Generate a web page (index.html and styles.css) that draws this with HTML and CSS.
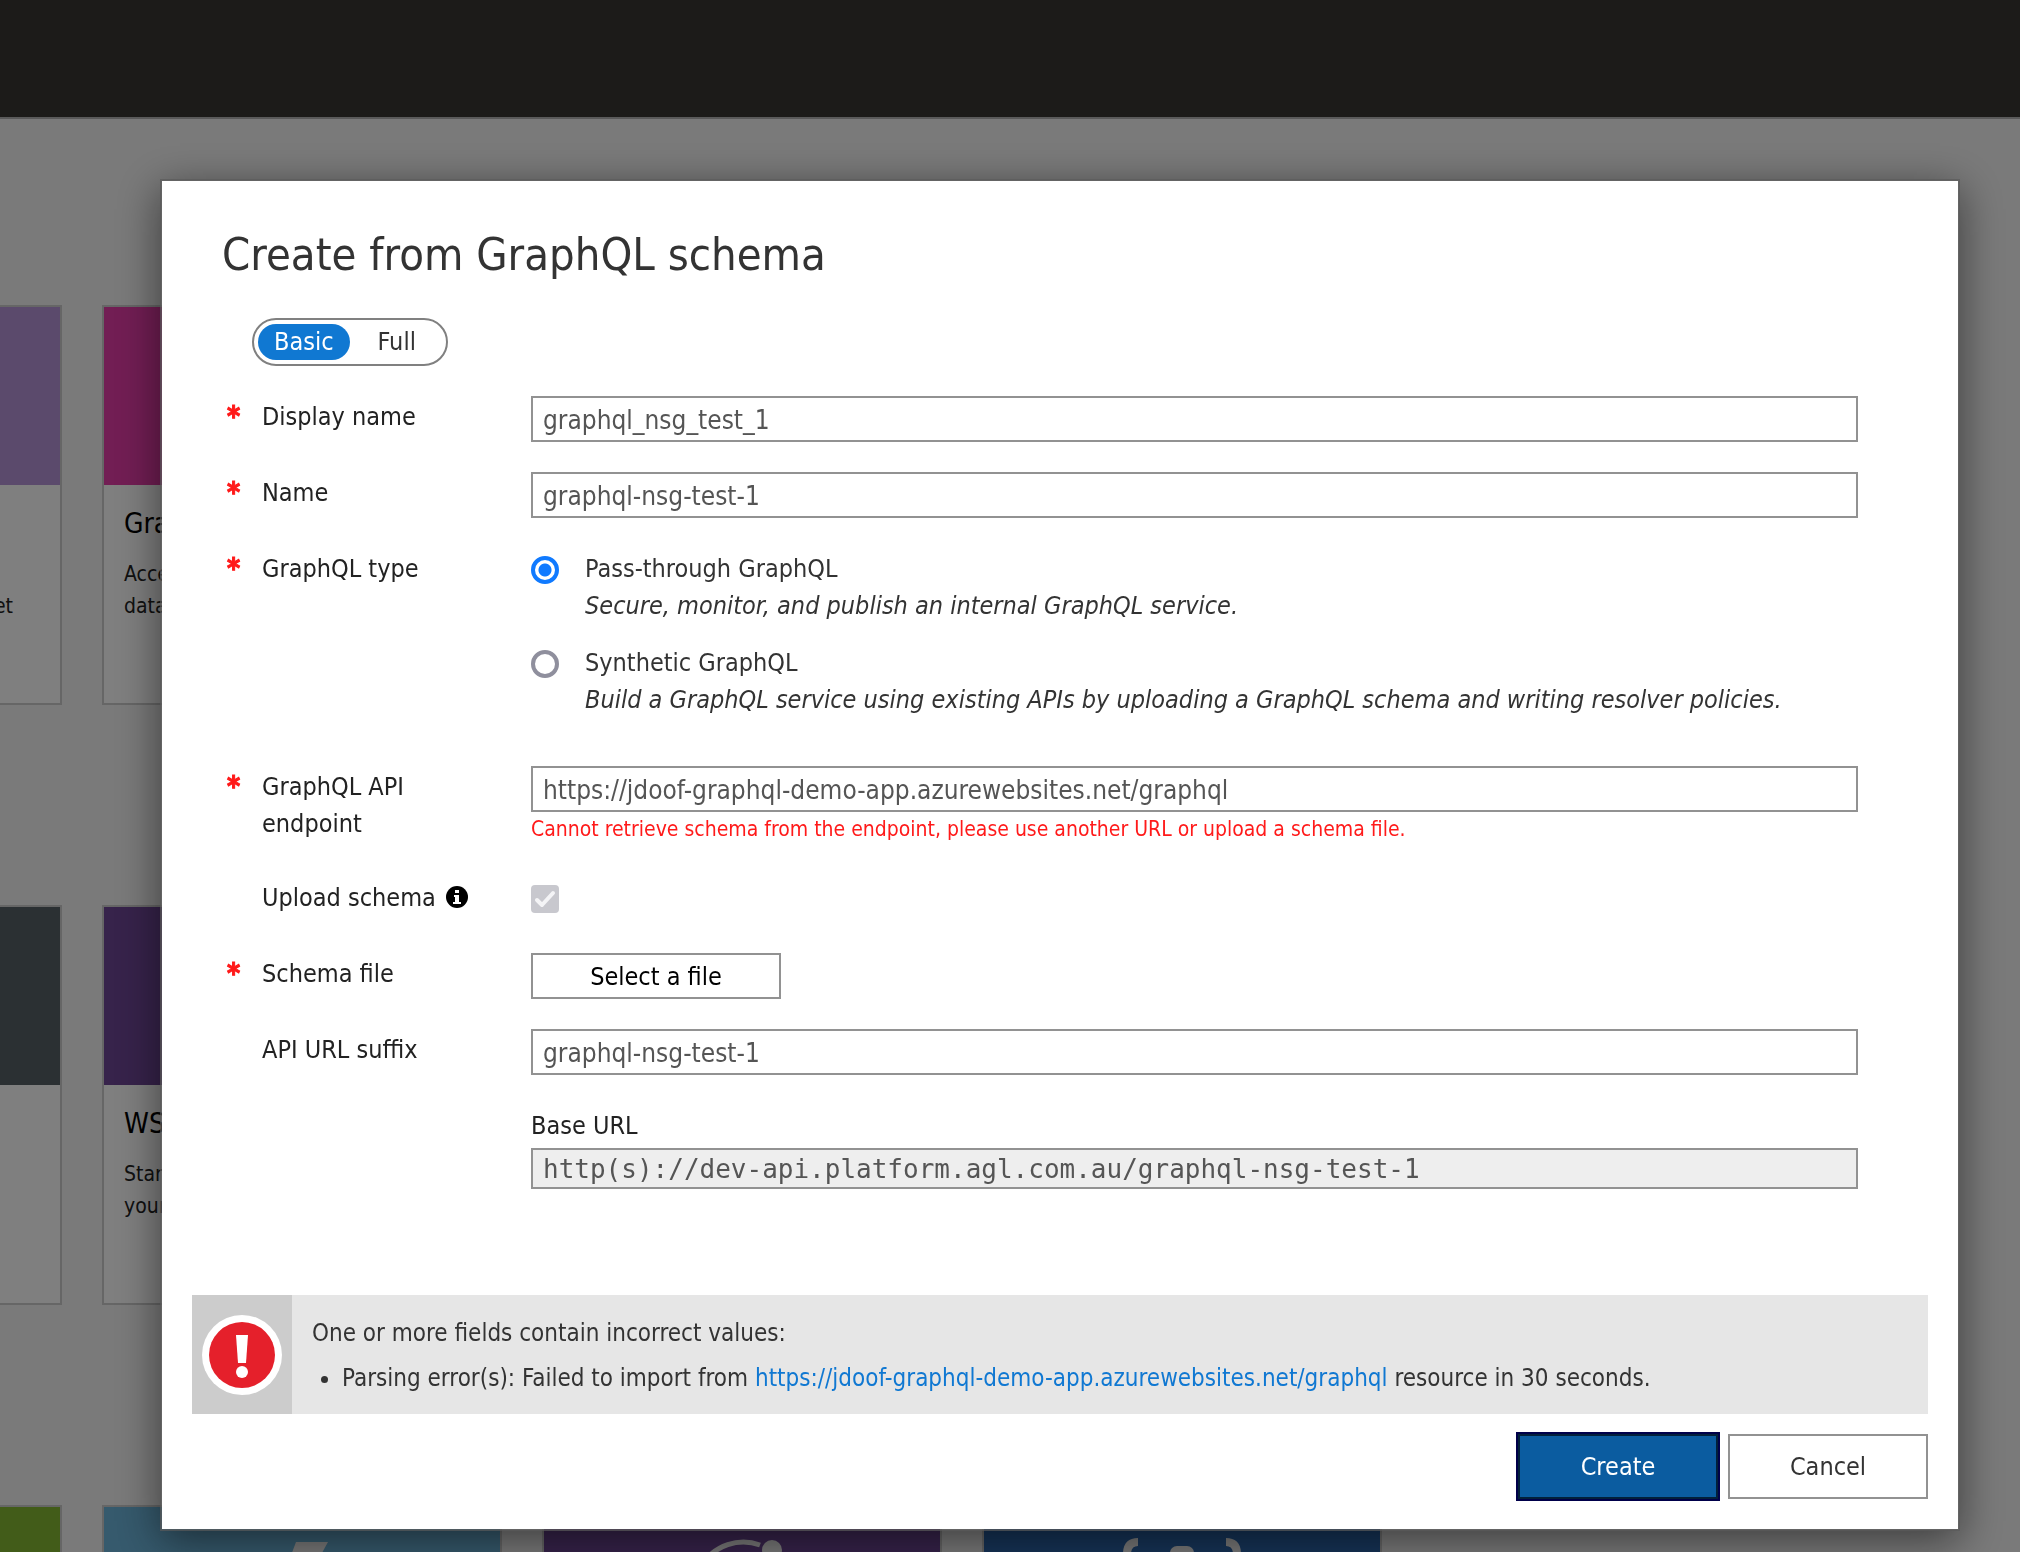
FILE: index.html
```html
<!DOCTYPE html>
<html lang="en">
<head>
    <meta charset="UTF-8">
    <meta name="viewport" content="width=device-width, initial-scale=1.0">
    <title>Create from GraphQL schema</title>
    <link rel="stylesheet" href="styles.css">
</head>
<body>
    <header class="top-bar"></header>

    <main class="gallery">
        <div class="card-row">
            <article class="card">
                <div class="card-head lilac"></div>
                <div class="card-body">
                    <p class="tail"><br>et</p>
                </div>
            </article>
            <article class="card">
                <div class="card-head pink"></div>
                <div class="card-body">
                    <h2>GraphQL</h2>
                    <p>Access the full capabilities of your<br>data from a single endpoint</p>
                </div>
            </article>
        </div>

        <div class="card-row">
            <article class="card">
                <div class="card-head slate"></div>
            </article>
            <article class="card">
                <div class="card-head purple"></div>
                <div class="card-body">
                    <h2>WSDL</h2>
                    <p>Standard XML representation of<br>your SOAP API</p>
                </div>
            </article>
        </div>

        <div class="card-row">
            <article class="card">
                <div class="card-head green"></div>
            </article>
            <article class="card">
                <div class="card-head sky">
                    <svg viewBox="0 0 396 178" aria-hidden="true"><path d="M192 35h32l-21 38h24l-50 72 12-54h-18z"/></svg>
                </div>
            </article>
            <article class="card">
                <div class="card-head purple">
                    <svg viewBox="0 0 396 178" aria-hidden="true">
                        <path class="line" d="M164 118a49 49 0 0 1 52-80"/>
                        <circle cx="228" cy="43" r="10"/>
                    </svg>
                </div>
            </article>
            <article class="card">
                <div class="card-head navy">
                    <svg viewBox="0 0 396 178" aria-hidden="true">
                        <path class="line thick" d="M154 35q-11 0-11 12v24q0 14-12 18q12 4 12 18v24q0 12 11 12M242 35q11 0 11 12v24q0 14 12 18q-12 4-12 18v24q0 12-11 12"/>
                        <rect x="186" y="39" width="24" height="90" rx="7"/>
                    </svg>
                </div>
            </article>
        </div>
    </main>

    <div class="overlay">
        <form class="modal" role="dialog" aria-labelledby="modal-title">
            <h1 id="modal-title">Create from GraphQL schema</h1>

            <div class="toggle">
                <button type="button" class="active">Basic</button>
                <button type="button">Full</button>
            </div>

            <div class="fields">
                <div class="field required">
                    <label for="display-name">Display name</label>
                    <input type="text" id="display-name" value="graphql_nsg_test_1">
                </div>

                <div class="field required">
                    <label for="name">Name</label>
                    <input type="text" id="name" value="graphql-nsg-test-1">
                </div>

                <div class="field required" role="radiogroup" aria-labelledby="type-label">
                    <span class="label" id="type-label">GraphQL type</span>
                    <div>
                        <div class="option">
                            <input type="radio" name="type" id="pass-through" checked>
                            <label for="pass-through">Pass-through GraphQL<br><em>Secure, monitor, and publish an internal GraphQL service.</em></label>
                        </div>
                        <div class="option">
                            <input type="radio" name="type" id="synthetic">
                            <label for="synthetic">Synthetic GraphQL<br><em>Build a GraphQL service using existing APIs by uploading a GraphQL schema and writing resolver policies.</em></label>
                        </div>
                    </div>
                </div>

                <div class="field required">
                    <label for="endpoint">GraphQL API endpoint</label>
                    <div>
                        <input type="text" id="endpoint" value="https://jdoof-graphql-demo-app.azurewebsites.net/graphql">
                        <p class="error">Cannot retrieve schema from the endpoint, please use another URL or upload a schema file.</p>
                    </div>
                </div>

                <div class="field">
                    <label for="upload">Upload schema
                        <svg class="info" viewBox="0 0 22 22" aria-hidden="true">
                            <circle cx="11" cy="11" r="11"/>
                            <path d="M9 4h4v3H9zM8 9h5v7h2v2H7v-2h2v-5H8z" fill="#fff"/>
                        </svg>
                    </label>
                    <input type="checkbox" id="upload" checked disabled>
                </div>

                <div class="field required">
                    <label for="schema-file">Schema file</label>
                    <button type="button" class="file-btn" id="schema-file">Select a file</button>
                </div>

                <div class="field">
                    <label for="suffix">API URL suffix</label>
                    <input type="text" id="suffix" value="graphql-nsg-test-1">
                </div>

                <div class="base-url">
                    <label for="base-url">Base URL</label>
                    <input type="text" id="base-url" value="http(s)://dev-api.platform.agl.com.au/graphql-nsg-test-1" readonly>
                </div>
            </div>

            <div class="alert" role="alert">
                <div class="alert-icon">
                    <svg viewBox="0 0 80 80" aria-hidden="true">
                        <circle cx="40" cy="40" r="40" fill="#fff"/>
                        <circle cx="40" cy="40" r="33" fill="#e5202b"/>
                        <path d="M34 20h12l-2 28h-8z" fill="#fff"/>
                        <circle cx="40" cy="57" r="6" fill="#fff"/>
                    </svg>
                </div>
                <div class="alert-text">
                    <p>One or more fields contain incorrect values:</p>
                    <ul>
                        <li>Parsing error(s): Failed to import from <a href="https://jdoof-graphql-demo-app.azurewebsites.net/graphql">https://jdoof-graphql-demo-app.azurewebsites.net/graphql</a> resource in 30 seconds.</li>
                    </ul>
                </div>
            </div>

            <div class="actions">
                <button type="submit" class="primary">Create</button>
                <button type="button">Cancel</button>
            </div>
        </form>
    </div>
</body>
</html>
```

FILE: styles.css
```css
* {
    box-sizing: border-box;
}
body {
    margin: 0;
    height: 100vh;
    overflow: hidden;
    background-color: #f4f4f4;
    color: #333;
    font-family: "DejaVu Sans Condensed", "DejaVu Sans", Tahoma, sans-serif;
    font-size: 25px;
    line-height: 37px;
}
h1, h2, p, ul {
    margin: 0;
    padding: 0;
    font-weight: normal;
}
button, input {
    font: inherit;
    color: inherit;
}
.top-bar {
    height: 119px;
    background-color: #383632;
    border-bottom: 2px solid #b4b4b4;
}

/* Cards behind the dialog, scrolled partly out to the left */
.gallery {
    display: flex;
    flex-direction: column;
    gap: 200px;
    margin-top: 186px;
    margin-left: -338px;
}
.card-row {
    display: flex;
    gap: 40px;
}
.card {
    flex: none;
    width: 400px;
    height: 400px;
    border: 2px solid #ccc;
    background-color: #fff;
    color: #222;
}
.card-head {
    height: 178px;
    fill: #f2f2f2;
}
.card-head svg {
    display: block;
}
.line {
    fill: none;
    stroke: #f2f2f2;
    stroke-width: 5px;
}
.thick {
    stroke-width: 8px;
}
.lilac { background-color: #b695d8; }
.pink { background-color: #e43ca8; }
.slate { background-color: #566066; }
.purple { background-color: #6e4696; }
.green { background-color: #84b832; }
.sky { background-color: #6cb4da; }
.navy { background-color: #2c68b0; }
.card-body {
    padding: 20px;
}
.card-body h2 {
    font-size: 28px;
    color: #000;
    margin-bottom: 16px;
}
.card-body p {
    font-size: 21px;
    line-height: 32px;
}
.card-body .tail {
    margin-top: 53px;
    padding-right: 27px;
    text-align: right;
}

.overlay {
    position: fixed;
    inset: 0;
    padding: 179px 60px 0 160px;
    background-color: rgba(0, 0, 0, 0.5);
}
.modal {
    padding: 40px 30px 30px;
    border: 2px solid rgba(90, 90, 90, 0.7);
    background-color: #fff;
    background-clip: padding-box;
    box-shadow: 0 10px 40px rgba(0, 0, 0, 0.5);
}
h1 {
    margin-left: 30px;
    font-size: 45px;
    line-height: 67px;
}
.toggle {
    display: inline-flex;
    margin: 30px 0 30px 60px;
    padding: 4px;
    border: 2px solid #808080;
    border-radius: 24px;
}
.toggle button {
    height: 36px;
    padding: 0 16px;
    border: none;
    border-radius: 18px;
    background: none;
    line-height: 36px;
}
.toggle button:last-child {
    padding: 0 26px 0 28px;
}
.toggle .active {
    background-color: #1078d2;
    color: #fff;
}

.fields {
    display: flex;
    flex-direction: column;
    gap: 30px;
    padding: 0 70px 0 30px;
    color: #222;
}
.field {
    display: grid;
    grid-template-columns: 229px 1fr;
    column-gap: 40px;
    align-items: start;
    min-height: 46px;
    padding-left: 40px;
    position: relative;
}
label, .label {
    display: block;
    padding-top: 2px;
}
.required::before {
    content: "*";
    position: absolute;
    left: 5px;
    top: 2px;
    color: #ff1a1a;
    font-size: 28px;
    font-weight: bold;
    -webkit-text-stroke: 1px #ff1a1a;
}
input[type="text"] {
    display: block;
    width: 100%;
    height: 46px;
    padding: 2px 10px 0;
    border: 2px solid #929292;
    border-radius: 0;
    background-color: #fff;
    color: #555;
    font-size: 26px;
}
input[type="radio"], input[type="checkbox"] {
    appearance: none;
    flex: none;
    width: 28px;
    height: 28px;
    margin: 8px 0 0;
}
input[type="radio"] {
    border: 4px solid #8f8f9d;
    border-radius: 50%;
}
input[type="radio"]:checked {
    border-color: #107aff;
    background: radial-gradient(circle, #107aff 6px, #fff 7px);
}
input[type="checkbox"] {
    border-radius: 4px;
    background: #c8c8ce url("data:image/svg+xml,%3Csvg xmlns='http://www.w3.org/2000/svg' viewBox='0 0 28 28'%3E%3Cpath d='M6 15l5 5L22 8' fill='none' stroke='%23f4f4f6' stroke-width='4' stroke-linecap='round' stroke-linejoin='round'/%3E%3C/svg%3E");
}
.option {
    display: flex;
    gap: 26px;
    margin-bottom: 18px;
    color: #333;
}
.error {
    color: #ff1a1a;
    font-size: 21px;
    line-height: 35px;
}
.info {
    width: 22px;
    height: 22px;
    margin-left: 3px;
    vertical-align: -2px;
}
.file-btn {
    width: 250px;
    height: 46px;
    border: 2px solid #929292;
    background-color: #fff;
    color: #000;
}
.base-url {
    padding-left: 309px;
}
#base-url {
    height: 41px;
    margin-top: 4px;
    padding-top: 0;
    background-color: #eee;
    font-family: "DejaVu Sans Mono", monospace;
}

.alert {
    display: flex;
    margin-top: 106px;
    background-color: #e6e6e6;
}
.alert-icon {
    display: flex;
    align-items: center;
    justify-content: center;
    width: 100px;
    background-color: #ccc;
}
.alert-icon svg {
    width: 80px;
    height: 80px;
}
.alert-text {
    padding: 20px 20px 17px;
    font-size: 24px;
}
.alert-text ul {
    margin-top: 8px;
    padding-left: 30px;
}
.alert a {
    color: #1078d2;
    text-decoration: none;
}
.actions {
    display: flex;
    justify-content: flex-end;
    gap: 10px;
    margin-top: 20px;
}
.actions button {
    width: 200px;
    height: 65px;
    border: 2px solid #929292;
    background-color: #fff;
}
.actions .primary {
    border-color: #02203a;
    outline: 2px solid #00004a;
    background-color: #0b5ca0;
    color: #fff;
}
```
